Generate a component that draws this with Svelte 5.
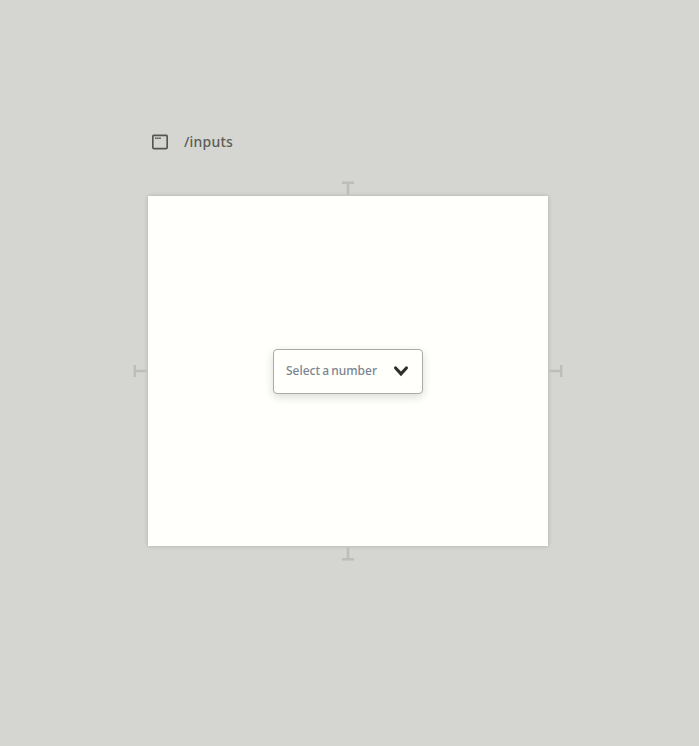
<script>
  const handles = ['top', 'right', 'bottom', 'left'];
</script>

<main>
  <header>
    <svg width="16" height="16" viewBox="0 0 16 16" aria-hidden="true">
      <rect x="0.8" y="1.4" width="14.4" height="13.2" rx="1.2" fill="none" stroke="#555651" stroke-width="1.7" />
      <path d="M3 4.3h1.6M5.1 4.3h1.6M7.2 4.3h1.6" stroke="#555651" stroke-width="1.6" />
    </svg>
    <span>/inputs</span>
  </header>

  <section class="frame">
    {#each handles as side}
      <svg class="handle {side}" width="14" height="14" viewBox="0 0 14 14" aria-hidden="true">
        <path d="M1 1.8H13M7 1.8V13.4" fill="none" stroke="#bdbeb9" stroke-width="2.6" />
      </svg>
    {/each}
    <button class="select" type="button">
      <span>Select a number</span>
      <svg width="16" height="12" viewBox="0 0 16 12" aria-hidden="true">
        <path d="M2.6 3L8 8.8L13.4 3" fill="none" stroke="#2f302c" stroke-width="3.2" stroke-linecap="round" />
      </svg>
    </button>
  </section>
</main>

<style>
  :global(body) {
    background: #d5d6d1;
  }

  main {
    box-sizing: border-box;
    width: 699px;
    height: 746px;
    padding: 126px 0 0 148px;
    background: #d5d6d1;
    font-family: "Noto Sans", "Open Sans", sans-serif;
  }

  header {
    display: flex;
    align-items: center;
    gap: 16px;
    height: 32px;
    margin-bottom: 38px;
    padding-left: 4px;
    color: #5b5c57;
    font-size: 14px;
    font-weight: 500;
    letter-spacing: 0.2px;
  }

  header span {
    padding-bottom: 2px;
  }

  .frame {
    position: relative;
    display: flex;
    align-items: center;
    justify-content: center;
    width: 400px;
    height: 350px;
    background: #fffffc;
    box-shadow: 0 0 4px rgba(0, 0, 0, 0.2);
  }

  .select {
    box-sizing: border-box;
    display: flex;
    align-items: center;
    justify-content: space-between;
    width: 150px;
    height: 45px;
    margin: 1px 0 0;
    padding: 0 13px 2px 12px;
    border: 1px solid #a9aba7;
    border-radius: 4px;
    background: #fffffc;
    box-shadow: 0 3px 10px rgba(0, 0, 0, 0.15);
    color: #7b8590;
    font-family: inherit;
    font-size: 12px;
    font-weight: 500;
    letter-spacing: 0;
    word-spacing: -1px;
    white-space: nowrap;
  }

  /* T-shaped resize grips centred on each edge */
  .handle {
    position: absolute;
  }

  .top {
    top: -15px;
    left: 193px;
  }

  .right {
    top: 168px;
    right: -15px;
    transform: rotate(90deg);
  }

  .bottom {
    bottom: -15px;
    left: 193px;
    transform: rotate(180deg);
  }

  .left {
    top: 168px;
    left: -15px;
    transform: rotate(-90deg);
  }
</style>
